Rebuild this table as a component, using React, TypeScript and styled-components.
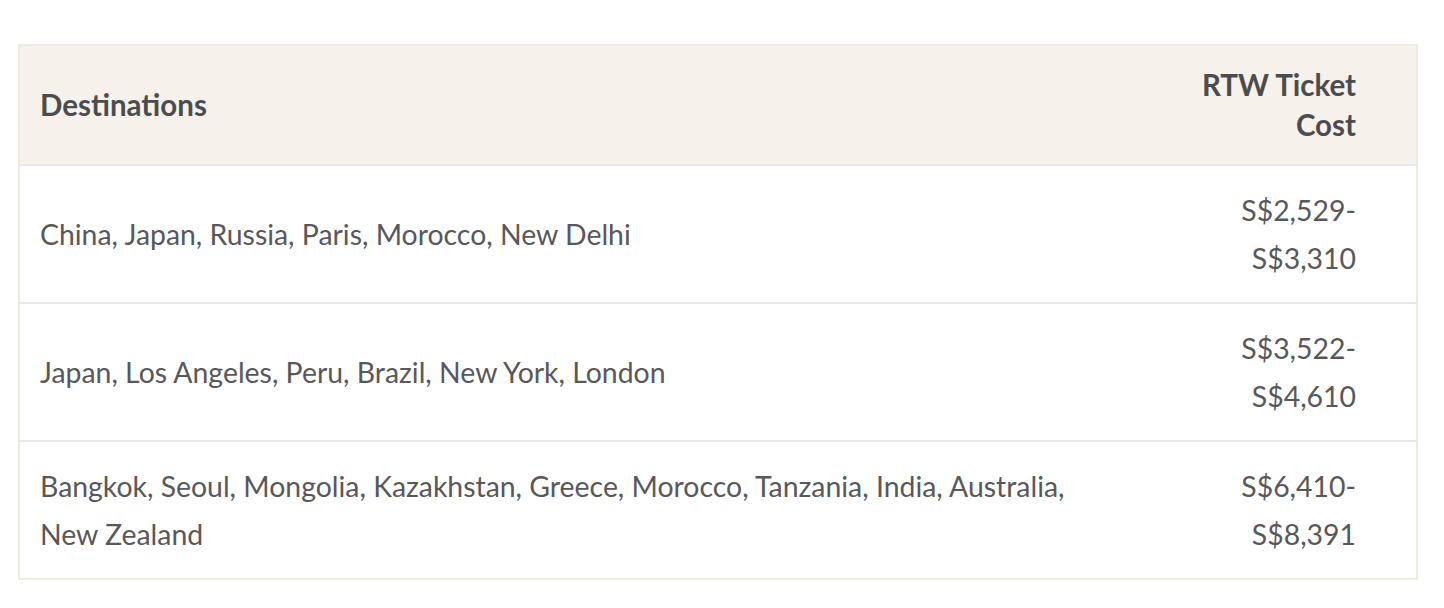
import React from 'react'
import styled, { createGlobalStyle } from 'styled-components'

const variables = {
  text: '#58585a',
  heading: '#4c4c4e',
  headBg: '#f6f2eb',
  frame: '#eeebe1',
  rule: '#e8e8e8',
  white: '#ffffff'
}

const GlobalStyle = createGlobalStyle`
  body {
    margin: 0;
    background: ${variables.white};
    font-family: Lato, "Liberation Sans", sans-serif;
  }
`

const Wrapper = styled.section`
  padding: 44px 26px 0 18px;
`

const Table = styled.table`
  width: 1400px;
  border-collapse: collapse;
  border: 2px solid ${variables.frame};
  color: ${variables.text};
`

const HeadRow = styled.tr`
  background-color: ${variables.headBg};
`

const HeadCell = styled.th<{ $right?: boolean }>`
  padding: 19px 60px 19px 20px;
  text-align: ${p => (p.$right ? 'right' : 'left')};
  width: ${p => (p.$right ? '168px' : 'auto')};
  font-size: 29.5px;
  line-height: 40px;
  font-weight: 700;
  color: ${variables.heading};
  vertical-align: middle;
`

const Row = styled.tr`
  border-top: 2px solid ${variables.rule};
`

const Cell = styled.td<{ $right?: boolean }>`
  padding: 20px 60px 20px 20px;
  text-align: ${p => (p.$right ? 'right' : 'left')};
  font-size: 28.4px;
  line-height: 48px;
  vertical-align: middle;
`

interface IRoute {
  places: string
  cost: string
}

const routes: IRoute[] = [
  { places: 'China, Japan, Russia, Paris, Morocco, New Delhi', cost: 'S$2,529-S$3,310' },
  { places: 'Japan, Los Angeles, Peru, Brazil, New York, London', cost: 'S$3,522-S$4,610' },
  {
    places: 'Bangkok, Seoul, Mongolia, Kazakhstan, Greece, Morocco, Tanzania, India, Australia, New Zealand',
    cost: 'S$6,410-S$8,391'
  }
]

const App: React.FC = () => {
  return (
    <Wrapper>
      <GlobalStyle />
      <Table>
        <thead>
          <HeadRow>
            <HeadCell>Destinations</HeadCell>
            <HeadCell $right>RTW Ticket Cost</HeadCell>
          </HeadRow>
        </thead>
        <tbody>
          {routes.map(route => (
            <Row key={route.cost}>
              <Cell>{route.places}</Cell>
              <Cell $right>{route.cost}</Cell>
            </Row>
          ))}
        </tbody>
      </Table>
    </Wrapper>
  )
}

export default App
